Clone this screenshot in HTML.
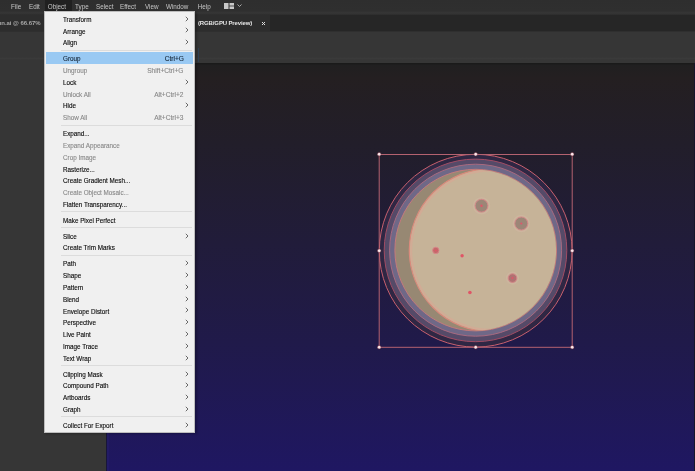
<!DOCTYPE html>
<html><head><meta charset="utf-8">
<style>
*{margin:0;padding:0;box-sizing:border-box}
html,body{width:695px;height:471px;overflow:hidden;background:#363636;font-family:"Liberation Sans",sans-serif}
.abs{position:absolute}
#menubar{will-change:transform;left:0;top:0;width:695px;height:15px;background:linear-gradient(#2e2e2e 0,#2f2f2f 11px,#363636 13px,#2c2c2c 15px)}
#menubar span{position:absolute;top:-0.5px;font-size:6.3px;color:#c6c6c6;line-height:14px;white-space:pre}
#tabbar{left:0;top:15px;width:695px;height:16px;background:#262626}
#tab{will-change:transform;left:0;top:15px;width:270px;height:16px;background:#2d2d2d}
#tab span{position:absolute;top:0;line-height:16px;font-size:6px;color:#e6e6e6;font-weight:bold;white-space:pre;letter-spacing:-0.13px}
#ctrl{left:0;top:31px;width:695px;height:32px;background:linear-gradient(#2b2b2b 0,#363636 1.5px,#363636 26px,#3a3a3a 27.5px,#363636 29px,#363636 32px)}
#leftp{left:0;top:62px;width:106px;height:409px;background:#363636}
#canvas{left:106px;top:63px;width:589px;height:408px;background:linear-gradient(#1a1a1a 0,#1a1a1a 1px,#201f20 2px,#241f21 15px,#221e2a 80px,#211c3a 180px,#201a4a 280px,#1f1762 408px)}
#menushadow{left:45px;top:12px;width:152px;height:422px;background:rgba(0,0,0,0.25);filter:blur(1px)}
#menu{left:43.7px;top:10.7px;width:151.6px;height:422px;background:#f0f0f0;border:1px solid #bdbdbd}
#items{left:44px;top:0;width:151px;height:471px;will-change:transform}
.mi{position:absolute;left:0;width:151px;height:11.8px;font-size:6.3px;line-height:11.8px;color:#0a0a0a;white-space:pre;-webkit-text-stroke:0.12px currentColor}
.mi .t{position:absolute;left:19px;top:0.5px}
.mi .s{position:absolute;right:11.5px;font-size:6.6px;top:0.5px}
.mi .ar{position:absolute;left:141px;top:2.4px}
.mi.d{color:#898989}
.mi.hl{left:2px;width:147.4px;height:12.3px;margin-top:-0.9px;background:#99c9f3;color:#17283a}
.mi.hl .t{left:17px;top:1.4px}
.mi.hl .s{right:9.5px;top:1.4px}
.sep{position:absolute;left:17px;width:131px;height:1px;background:#dcdcdc}
</style></head><body>
<div id="menubar" class="abs">
<span style="left:11px">File</span>
<span style="left:29px">Edit</span>
<div class="abs" style="left:44.5px;top:0;width:27px;height:10.5px;background:#202020"></div><span style="left:47.8px">Object</span>
<span style="left:75px">Type</span>
<span style="left:96px">Select</span>
<span style="left:120px">Effect</span>
<span style="left:145px">View</span>
<span style="left:166px">Window</span>
<span style="left:197.8px">Help</span>
<svg class="abs" style="left:223.5px;top:3px" width="10" height="6" viewBox="0 0 10 6"><rect x="0" y="0" width="4.5" height="6" fill="#c8c8c8"/><rect x="5.5" y="0" width="4.5" height="2.6" fill="#c8c8c8"/><rect x="5.5" y="3.4" width="4.5" height="2.6" fill="#c8c8c8"/></svg>
<svg class="abs" style="left:237px;top:4px" width="5" height="3" viewBox="0 0 5 3"><path d="M0.5 0.5L2.5 2.5L4.5 0.5" fill="none" stroke="#a8a8a8" stroke-width="1"/></svg>
</div>
<div id="tabbar" class="abs"></div>
<div id="tab" class="abs"><span style="left:auto;right:229.5px;color:#a6a6a6;letter-spacing:-0.05px">nn.ai @ 66.67%</span><span style="left:198px">(RGB/GPU Preview)</span><svg class="abs" style="left:261px;top:6px" width="5" height="5" viewBox="0 0 5 5"><path d="M1 1L4 4M4 1L1 4" stroke="#e0e0e0" stroke-width="1"/></svg></div>
<div id="ctrl" class="abs"></div>
<div id="leftp" class="abs"></div>
<div class="abs" style="left:198px;top:48px;width:1px;height:14px;background:#2f4052"></div>
<div id="canvas" class="abs"></div>
<div class="abs" style="left:106px;top:63px;width:1px;height:408px;background:linear-gradient(#1a1a1a,#18163a)"></div>
<div class="abs" style="left:107px;top:63px;width:2px;height:408px;background:rgba(60,50,160,0.12)"></div>
<div class="abs" style="left:694px;top:63px;width:1px;height:408px;background:#17152a"></div>
<svg id="art" class="abs" style="left:0;top:0" width="695" height="471" viewBox="0 0 695 471">
<defs><clipPath id="moonclip"><circle cx="475.7" cy="250.1" r="80.4"/></clipPath></defs>
<circle cx="475.7" cy="250.7" r="96.4" fill="#2f2744" stroke="#c8606e" stroke-width="1"/>
<circle cx="475.5" cy="250.4" r="91.3" fill="#554a68" stroke="#a04c64" stroke-width="1"/>
<circle cx="475.6" cy="250.2" r="86" fill="#6f6887" stroke="#a86a80" stroke-width="1"/>
<circle cx="475.7" cy="250.1" r="80.8" fill="#978873" stroke="#c47a7c" stroke-width="1"/>
<g clip-path="url(#moonclip)"><circle cx="490.8" cy="250.1" r="81.5" fill="#c6b398" stroke="#d98a7c" stroke-width="1.2"/><circle cx="490.8" cy="250.1" r="79.6" fill="none" stroke="#d6a894" stroke-width="2" opacity="0.75"/></g>
<g fill="none" stroke="#d4b8a4" stroke-width="1.6" opacity="0.5">
<circle cx="481.5" cy="205.7" r="8"/>
<circle cx="521.3" cy="223.5" r="8"/>
<circle cx="512.5" cy="278.1" r="5.8"/>
</g>
<g stroke="#d8868a" stroke-width="0.9">
<circle cx="481.5" cy="205.7" r="6.4" fill="#9c8677"/>
<circle cx="521.3" cy="223.5" r="6.5" fill="#9c8677"/>
<circle cx="435.8" cy="250.4" r="3.2" fill="#c46a6a"/>
<circle cx="512.5" cy="278.1" r="4.3" fill="#b07272"/>
</g>
<g fill="#e0566a">
<circle cx="481.5" cy="205.7" r="1.2"/>
<circle cx="521.3" cy="223.5" r="1.1"/>
<circle cx="435.8" cy="250.4" r="1"/>
<circle cx="512.5" cy="278.1" r="1"/>
</g>
<g fill="#e05566">
<circle cx="462.1" cy="255.8" r="1.7"/>
<circle cx="469.9" cy="292.5" r="1.8"/>
</g>
<rect x="379.2" y="154.5" width="193" height="192.8" fill="none" stroke="#b46270" stroke-width="1"/>
<g fill="#fbe6ea" stroke="#6a2a3a" stroke-width="0.5">
<circle cx="379.2" cy="154.2" r="1.8"/><circle cx="475.7" cy="154.2" r="1.8"/><circle cx="572.2" cy="154.2" r="1.8"/>
<circle cx="379.2" cy="250.7" r="1.8"/><circle cx="572.2" cy="250.7" r="1.8"/>
<circle cx="379.2" cy="347.2" r="1.8"/><circle cx="475.7" cy="347.2" r="1.8"/><circle cx="572.2" cy="347.2" r="1.8"/>
</g>
</svg>
<div id="menushadow" class="abs"></div>
<div id="menu" class="abs"></div>
<div id="items" class="abs">
<div class="mi" style="top:13.20px"><span class="t">Transform</span><svg class="ar" width="4" height="6" viewBox="0 0 4 6"><path d="M0.8 0.8 L3 3 L0.8 5.2" fill="none" stroke="#505050" stroke-width="0.85"/></svg></div>
<div class="mi" style="top:25.02px"><span class="t">Arrange</span><svg class="ar" width="4" height="6" viewBox="0 0 4 6"><path d="M0.8 0.8 L3 3 L0.8 5.2" fill="none" stroke="#505050" stroke-width="0.85"/></svg></div>
<div class="mi" style="top:36.84px"><span class="t">Align</span><svg class="ar" width="4" height="6" viewBox="0 0 4 6"><path d="M0.8 0.8 L3 3 L0.8 5.2" fill="none" stroke="#505050" stroke-width="0.85"/></svg></div>
<div class="sep" style="top:49.66px"></div>
<div class="mi hl" style="top:52.66px"><span class="t">Group</span><span class="s">Ctrl+G</span></div>
<div class="mi d" style="top:64.48px"><span class="t">Ungroup</span><span class="s">Shift+Ctrl+G</span></div>
<div class="mi" style="top:76.30px"><span class="t">Lock</span><svg class="ar" width="4" height="6" viewBox="0 0 4 6"><path d="M0.8 0.8 L3 3 L0.8 5.2" fill="none" stroke="#505050" stroke-width="0.85"/></svg></div>
<div class="mi d" style="top:88.12px"><span class="t">Unlock All</span><span class="s">Alt+Ctrl+2</span></div>
<div class="mi" style="top:99.94px"><span class="t">Hide</span><svg class="ar" width="4" height="6" viewBox="0 0 4 6"><path d="M0.8 0.8 L3 3 L0.8 5.2" fill="none" stroke="#505050" stroke-width="0.85"/></svg></div>
<div class="mi d" style="top:111.76px"><span class="t">Show All</span><span class="s">Alt+Ctrl+3</span></div>
<div class="sep" style="top:124.58px"></div>
<div class="mi" style="top:127.58px"><span class="t">Expand...</span></div>
<div class="mi d" style="top:139.40px"><span class="t">Expand Appearance</span></div>
<div class="mi d" style="top:151.22px"><span class="t">Crop Image</span></div>
<div class="mi" style="top:163.04px"><span class="t">Rasterize...</span></div>
<div class="mi" style="top:174.86px"><span class="t">Create Gradient Mesh...</span></div>
<div class="mi d" style="top:186.68px"><span class="t">Create Object Mosaic...</span></div>
<div class="mi" style="top:198.50px"><span class="t">Flatten Transparency...</span></div>
<div class="sep" style="top:211.32px"></div>
<div class="mi" style="top:214.32px"><span class="t">Make Pixel Perfect</span></div>
<div class="sep" style="top:227.14px"></div>
<div class="mi" style="top:230.14px"><span class="t">Slice</span><svg class="ar" width="4" height="6" viewBox="0 0 4 6"><path d="M0.8 0.8 L3 3 L0.8 5.2" fill="none" stroke="#505050" stroke-width="0.85"/></svg></div>
<div class="mi" style="top:241.96px"><span class="t">Create Trim Marks</span></div>
<div class="sep" style="top:254.78px"></div>
<div class="mi" style="top:257.78px"><span class="t">Path</span><svg class="ar" width="4" height="6" viewBox="0 0 4 6"><path d="M0.8 0.8 L3 3 L0.8 5.2" fill="none" stroke="#505050" stroke-width="0.85"/></svg></div>
<div class="mi" style="top:269.60px"><span class="t">Shape</span><svg class="ar" width="4" height="6" viewBox="0 0 4 6"><path d="M0.8 0.8 L3 3 L0.8 5.2" fill="none" stroke="#505050" stroke-width="0.85"/></svg></div>
<div class="mi" style="top:281.42px"><span class="t">Pattern</span><svg class="ar" width="4" height="6" viewBox="0 0 4 6"><path d="M0.8 0.8 L3 3 L0.8 5.2" fill="none" stroke="#505050" stroke-width="0.85"/></svg></div>
<div class="mi" style="top:293.24px"><span class="t">Blend</span><svg class="ar" width="4" height="6" viewBox="0 0 4 6"><path d="M0.8 0.8 L3 3 L0.8 5.2" fill="none" stroke="#505050" stroke-width="0.85"/></svg></div>
<div class="mi" style="top:305.06px"><span class="t">Envelope Distort</span><svg class="ar" width="4" height="6" viewBox="0 0 4 6"><path d="M0.8 0.8 L3 3 L0.8 5.2" fill="none" stroke="#505050" stroke-width="0.85"/></svg></div>
<div class="mi" style="top:316.88px"><span class="t">Perspective</span><svg class="ar" width="4" height="6" viewBox="0 0 4 6"><path d="M0.8 0.8 L3 3 L0.8 5.2" fill="none" stroke="#505050" stroke-width="0.85"/></svg></div>
<div class="mi" style="top:328.70px"><span class="t">Live Paint</span><svg class="ar" width="4" height="6" viewBox="0 0 4 6"><path d="M0.8 0.8 L3 3 L0.8 5.2" fill="none" stroke="#505050" stroke-width="0.85"/></svg></div>
<div class="mi" style="top:340.52px"><span class="t">Image Trace</span><svg class="ar" width="4" height="6" viewBox="0 0 4 6"><path d="M0.8 0.8 L3 3 L0.8 5.2" fill="none" stroke="#505050" stroke-width="0.85"/></svg></div>
<div class="mi" style="top:352.34px"><span class="t">Text Wrap</span><svg class="ar" width="4" height="6" viewBox="0 0 4 6"><path d="M0.8 0.8 L3 3 L0.8 5.2" fill="none" stroke="#505050" stroke-width="0.85"/></svg></div>
<div class="sep" style="top:365.16px"></div>
<div class="mi" style="top:368.16px"><span class="t">Clipping Mask</span><svg class="ar" width="4" height="6" viewBox="0 0 4 6"><path d="M0.8 0.8 L3 3 L0.8 5.2" fill="none" stroke="#505050" stroke-width="0.85"/></svg></div>
<div class="mi" style="top:379.98px"><span class="t">Compound Path</span><svg class="ar" width="4" height="6" viewBox="0 0 4 6"><path d="M0.8 0.8 L3 3 L0.8 5.2" fill="none" stroke="#505050" stroke-width="0.85"/></svg></div>
<div class="mi" style="top:391.80px"><span class="t">Artboards</span><svg class="ar" width="4" height="6" viewBox="0 0 4 6"><path d="M0.8 0.8 L3 3 L0.8 5.2" fill="none" stroke="#505050" stroke-width="0.85"/></svg></div>
<div class="mi" style="top:403.62px"><span class="t">Graph</span><svg class="ar" width="4" height="6" viewBox="0 0 4 6"><path d="M0.8 0.8 L3 3 L0.8 5.2" fill="none" stroke="#505050" stroke-width="0.85"/></svg></div>
<div class="sep" style="top:416.44px"></div>
<div class="mi" style="top:419.44px"><span class="t">Collect For Export</span><svg class="ar" width="4" height="6" viewBox="0 0 4 6"><path d="M0.8 0.8 L3 3 L0.8 5.2" fill="none" stroke="#505050" stroke-width="0.85"/></svg></div>

</div>
</body></html>
